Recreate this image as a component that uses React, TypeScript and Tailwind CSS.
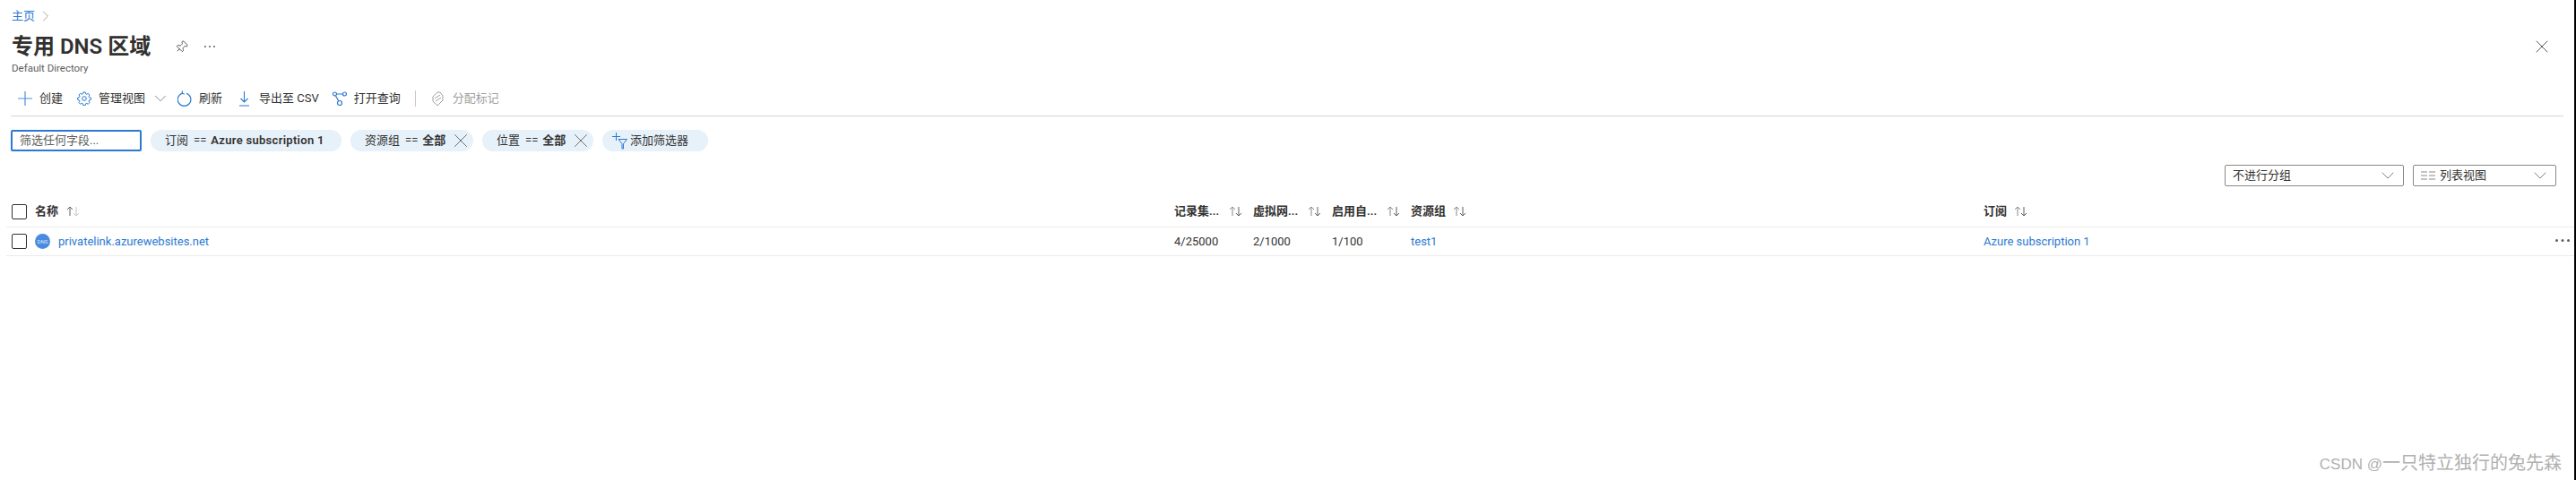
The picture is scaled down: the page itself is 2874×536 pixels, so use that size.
import { ChevronDown, ChevronRight, Pin, X } from 'lucide-react'

const font = { fontFamily: 'Roboto, "Noto Sans CJK SC", sans-serif' }

function SortArrows({ active = false }: { active?: boolean }) {
  return (
    <svg width="16" height="12" viewBox="0 0 16 12" fill="none" strokeWidth="1">
      <path d="M4 11V1M1 4l3-3 3 3" stroke={active ? '#605e5c' : '#8a8886'} />
      <path d="M11 1v10M8 8l3 3 3-3" stroke={active ? '#c8c6c4' : '#605e5c'} />
    </svg>
  )
}

function Dots({ r, gap, color }: { r: number; gap: number; color: string }) {
  const w = gap * 2 + r * 2
  return (
    <svg width={w} height={r * 2} viewBox={`0 0 ${w} ${r * 2}`} fill={color}>
      <circle cx={r} cy={r} r={r} />
      <circle cx={r + gap} cy={r} r={r} />
      <circle cx={r + gap * 2} cy={r} r={r} />
    </svg>
  )
}

function Checkbox() {
  return <div className="h-[17px] w-[17px] shrink-0 rounded-[2px] border border-[#323130]" />
}

function ToolButton({ icon, label, disabled = false }: { icon: React.ReactNode; label: string; disabled?: boolean }) {
  return (
    <div className={`flex items-center gap-2 ${disabled ? 'text-[#a19f9d]' : 'text-[#323130]'}`}>
      {icon}
      <span>{label}</span>
    </div>
  )
}

function HeaderCell({ label, className, gap }: { label: string; className: string; gap: string }) {
  return (
    <div className={`flex items-center font-semibold ${gap} ${className}`}>
      <span>{label}</span>
      <SortArrows />
    </div>
  )
}

function FilterPill({ name, width }: { name: string; width: string }) {
  return (
    <div className={`ml-[10px] flex h-[24px] items-center rounded-full bg-[#e7f1fa] pl-[16px] ${width}`}>
      <span>{name}</span>
      <span className="ml-[6px]">==</span>
      <b className="ml-[5px] font-semibold">全部</b>
      <X className="ml-[4px] h-[26px] w-[26px] text-[#484644]" strokeWidth={0.7} />
    </div>
  )
}

export default function App() {
  return (
    <div className="flex h-[536px] w-[2874px] overflow-hidden bg-white text-[13px] text-[#323130]" style={font}>
      <main className="relative flex w-[2872px] flex-col">
        {/* Breadcrumb */}
        <div className="mt-[10px] flex h-[16px] items-center gap-[2px] pl-[13px] text-[13px] text-[#2b79d1]">
          <span>主页</span>
          <ChevronRight className="h-[20px] w-[20px] text-[#8a8886]" strokeWidth={0.9} />
        </div>

        {/* Title */}
        <div className="mt-[12px] flex h-[28px] items-center pl-[13px] pr-[24px]">
          <h1 className="w-[182px] text-[24px] font-semibold leading-none whitespace-nowrap">专用 DNS 区域</h1>
          <Pin className="h-[15px] w-[15px] rotate-45" strokeWidth={1.25} />
          <span className="ml-[18px]">
            <Dots r={1} gap={5} color="#605e5c" />
          </span>
          <X className="ml-auto h-[24px] w-[24px] text-[#484644]" strokeWidth={0.9} />
        </div>
        <div className="mt-[2px] h-[16px] pl-[13px] text-[11.5px] leading-[16px] text-[#605e5c]">Default Directory</div>

        {/* Toolbar */}
        <div className="mx-[12px] mt-[10px] flex h-[36px] items-center border-b border-[#d5d5d5] pb-[3px] pl-[8px]">
          <ToolButton
            label="创建"
            icon={
              <svg width="16" height="16" viewBox="0 0 16 16" stroke="#4a90e0" strokeWidth="1.2">
                <path d="M8 0v16M0 8h16" />
              </svg>
            }
          />
          <div className="ml-[16px] flex items-center gap-2">
            <svg width="16" height="16" viewBox="0 0 24 24" fill="none" stroke="#2b79d1" strokeWidth="1.5">
              <path d="M9.67 4.14 10.2 1.5h3.6l.53 2.64 1.9.8 2.24-1.5 2.55 2.55-1.5 2.24.8 1.9 2.64.53v3.6l-2.64.53-.8 1.9 1.5 2.24-2.55 2.55-2.24-1.5-1.9.8-.53 2.64h-3.6l-.53-2.64-1.9-.8-2.24 1.5-2.55-2.55 1.5-2.24-.8-1.9-2.64-.53v-3.6l2.64-.53.8-1.9-1.5-2.24 2.55-2.55 2.24 1.5z" />
              <circle cx="12" cy="12" r="3.5" />
            </svg>
            <span>管理视图</span>
            <ChevronDown className="-ml-[2px] h-[22px] w-[22px] text-[#605e5c]" strokeWidth={0.8} />
          </div>
          <div className="ml-[8px]">
            <ToolButton
              label="刷新"
              icon={
                <svg width="16" height="18" viewBox="0 0 16 18" fill="none" stroke="#2b79d1" strokeWidth="1.2">
                  <path d="M10 3.2A7.3 7.3 0 1 1 5.2 3.2" />
                  <path d="M5.5 0.5 5.2 3.4l2.6 .6" />
                </svg>
              }
            />
          </div>
          <div className="ml-[19px]">
            <ToolButton
              label="导出至 CSV"
              icon={
                <svg className="mr-[3px]" width="11" height="17" viewBox="0 0 11 17" fill="none" stroke="#2b79d1" strokeWidth="1.1">
                  <path d="M5.5 0v12M1.5 8l4 4 4-4M0 16h11" />
                </svg>
              }
            />
          </div>
          <div className="ml-[15px]">
            <ToolButton
              label="打开查询"
              icon={
                <svg width="16" height="16" viewBox="0 0 16 16" fill="none" stroke="#2b79d1" strokeWidth="1.2">
                  <circle cx="2.5" cy="3" r="2" />
                  <circle cx="13.5" cy="3" r="2" />
                  <circle cx="8" cy="13" r="2.5" />
                  <path d="M4.5 3h7M3.5 5 6.8 10.8" />
                </svg>
              }
            />
          </div>
          <div className="ml-[16px] mr-[18px] h-[18px] w-px bg-[#c8c6c4]" />
          <ToolButton
            disabled
            label="分配标记"
            icon={
              <svg className="mr-[2px]" width="13" height="17" viewBox="0 0 13 17" fill="none" stroke="#a19f9d" strokeWidth="1">
                <path d="M6 1 1 6v5l5 5 6-6V5L9 1zM3 8l6-4M4 11l6-4" />
              </svg>
            }
          />
        </div>

        {/* Filters */}
        <div className="mt-[15px] flex h-[24px] items-center pl-[12px]">
          <div className="flex h-[24px] w-[146px] items-center rounded-[2px] border-2 border-[#2b79d1] pl-[8px] text-[#605e5c]">
            筛选任何字段...
          </div>
          <div className="ml-[10px] flex h-[24px] w-[213px] items-center rounded-full bg-[#e7f1fa] pl-[16px]">
            <span>订阅</span>
            <span className="ml-[6px]">==</span>
            <b className="ml-[5px] font-semibold tracking-[0.3px]">Azure subscription 1</b>
          </div>
          <FilterPill name="资源组" width="w-[137px]" />
          <FilterPill name="位置" width="w-[124px]" />
          <div className="ml-[10px] flex h-[24px] w-[118px] items-center gap-[3px] rounded-full bg-[#e7f1fa] pl-[11px]">
            <svg width="17" height="19" viewBox="0 0 17 19" fill="none" stroke="#2b79d1" strokeWidth="1">
              <path d="M4.5 0v9M0 4.5h9M7 7.5h9.5l-4 5v5.5h-1.5v-5.5z" />
            </svg>
            <span>添加筛选器</span>
          </div>
        </div>

        {/* Grouping */}
        <div className="mt-[15px] flex h-[24px] justify-end gap-[10px] pr-[20px]">
          <div className="flex w-[200px] items-center justify-between rounded-[2px] border border-[#8a8886] pl-[8px] pr-[5px]">
            <span>不进行分组</span>
            <ChevronDown className="h-[24px] w-[24px] text-[#605e5c]" strokeWidth={0.8} />
          </div>
          <div className="flex w-[160px] items-center rounded-[2px] border border-[#8a8886] pl-[8px] pr-[5px]">
            <svg className="mr-[5px]" width="16" height="10" viewBox="0 0 16 10" stroke="#8a8886" strokeWidth="1">
              <path d="M0 1h7M0 5h7M0 9h7M9 1h7M9 5h7M9 9h7" />
            </svg>
            <span>列表视图</span>
            <ChevronDown className="ml-auto h-[24px] w-[24px] text-[#605e5c]" strokeWidth={0.8} />
          </div>
        </div>

        {/* Table */}
        <div className="ml-[7px] mt-[13px] flex h-[33px] items-center border-b border-[#edebe9] pb-[2px]">
          <div className="flex w-[1303px] items-center pl-[6px]">
            <Checkbox />
            <span className="ml-[9px] font-semibold">名称</span>
            <span className="ml-[9px]">
              <SortArrows active />
            </span>
          </div>
          <HeaderCell label="记录集..." className="w-[88px]" gap="gap-[11px]" />
          <HeaderCell label="虚拟网..." className="w-[88px]" gap="gap-[11px]" />
          <HeaderCell label="启用自..." className="w-[88px]" gap="gap-[11px]" />
          <HeaderCell label="资源组" className="w-[639px]" gap="gap-[8px]" />
          <HeaderCell label="订阅" className="" gap="gap-[8px]" />
        </div>
        <div className="ml-[7px] flex h-[32px] items-center border-b border-[#edebe9]">
          <div className="flex w-[1303px] items-center pl-[6px]">
            <Checkbox />
            <svg className="ml-[9px]" width="17" height="17" viewBox="0 0 17 17">
              <circle cx="8.5" cy="8.5" r="8.5" fill="#4a8be0" />
              <text x="8.5" y="10.5" textAnchor="middle" fontSize="6" fill="#dbe9fb" fontFamily="Roboto">DNS</text>
            </svg>
            <span className="ml-[9px] text-[#2b79d1]">privatelink.azurewebsites.net</span>
          </div>
          <div className="w-[88px]">4/25000</div>
          <div className="w-[88px]">2/1000</div>
          <div className="w-[88px]">1/100</div>
          <div className="w-[639px] text-[#2b79d1]">test1</div>
          <div className="text-[#2b79d1]">Azure subscription 1</div>
          <span className="ml-auto mr-[5px] -mt-[3px]">
            <Dots r={1.5} gap={6.5} color="#605e5c" />
          </span>
        </div>

        {/* Watermark */}
        <div className="absolute bottom-[4px] right-[14px] flex items-baseline whitespace-nowrap text-[#b0b0b0]" style={{ fontFamily: '"Liberation Sans", "Noto Sans CJK SC", sans-serif' }}>
          <span className="text-[17px]">CSDN @</span>
          <span className="text-[20px]">一只特立独行的兔先森</span>
        </div>
      </main>
      <div className="w-[2px] bg-black" />
    </div>
  )
}
